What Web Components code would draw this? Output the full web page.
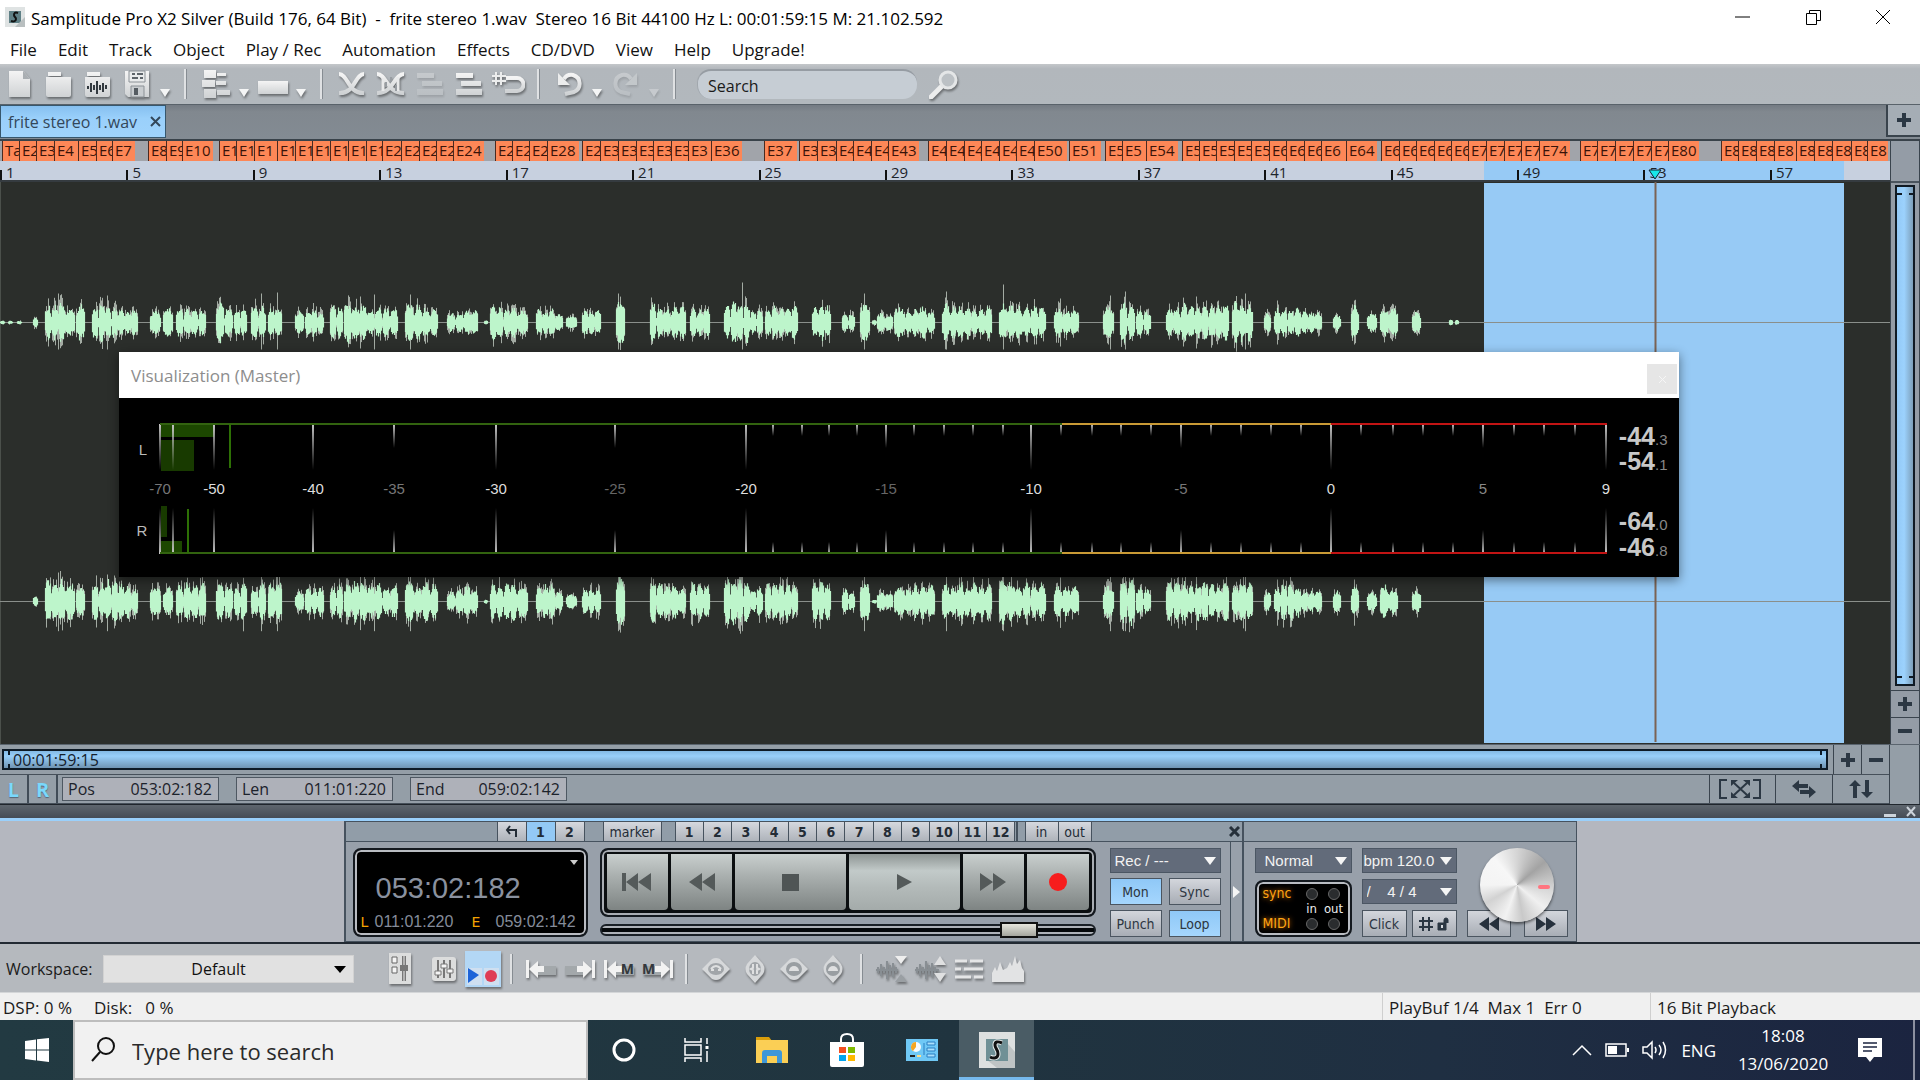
<!DOCTYPE html>
<html lang="en">
<head>
<meta charset="utf-8">
<title>Samplitude Pro X2 Silver</title>
<style>
    html, body {
        margin: 0;
        height: 100%;
    }

    body {
        font-family: "Open Sans", "Noto Sans", sans-serif;
        font-size: 16px;
        color: #111;
        overflow: hidden;
    }
</style>
</head>
<body>
<daw-app></daw-app>

<script>
    const BASE_CSS = `
        * { box-sizing: border-box; }
        button, input, select { font: inherit; color: inherit; margin: 0; padding: 0; border: 0; background: none; border-radius: 0; outline: none; }
        button { display: flex; align-items: center; justify-content: center; }
        a { color: inherit; text-decoration: none; }
    `;

    // Registers an element whose shadow root is filled from a template
    function define(name, css, html, setup) {
        const template = document.createElement('template');
        template.innerHTML = `<style>${BASE_CSS}${css}</style>${html}`;

        customElements.define(name, class extends HTMLElement {
            constructor() {
                super();
                this.attachShadow({ mode: 'open' });
            }

            connectedCallback() {
                if (this.shadowRoot.firstChild) return;
                this.shadowRoot.appendChild(template.content.cloneNode(true));
                if (setup) setup(this, this.shadowRoot);
            }
        });
    }

    /* ---------- icons ---------- */

    const ICONS = {
        app: [20, 20, '<path d="M0 0h20v20H0z" fill="#dfe3e3"/><path d="M4 4h12v12H4z" fill="#5f8086"/><path d="M20 10v10H10z" fill="#b9bfc0"/><path d="M13 6c-3-1-4 0-4 2s2 2 2 4-2 3-5 2" fill="none" stroke="#111" stroke-width="2"/>'],
        newdoc: [24, 28, '<path d="M1 1h14l7 8v18H1z" fill="url(#m)"/><path d="M15 1v8h7z" fill="#a9aeb2"/>'],
        folder: [28, 26, '<path d="M3 1h13v4H3zM1 6h25v18a2 2 0 0 1-2 2H3a2 2 0 0 1-2-2z" fill="url(#m)"/>'],
        wavefolder: [28, 26, '<path d="M3 1h13v4H3zM1 6h25v18a2 2 0 0 1-2 2H3a2 2 0 0 1-2-2z" fill="url(#m)"/><path d="M4 15v3M7 12v9M10 14v5M13 10v13M16 14v5M19 12v9M22 14v4" stroke="#333a40" stroke-width="2"/>'],
        save: [26, 28, '<path d="M1 1h24v26H4l-3-3z" fill="url(#m)"/><path d="M5 1h16v11H5z" fill="#e9ebec" stroke="#8b9196"/><path d="M8 4h3m2 0h6M8 8h6m2 0h3" stroke="#5d646a" stroke-width="2"/><path d="M7 16h13v11H7z" fill="#c9cdd0" stroke="#8b9196"/><path d="M10 18h4v7h-4z" fill="#555c62"/>'],
        caret: [12, 28, '<path d="M1 19h10l-5 8z" fill="#f4f5f5"/>'],
        tracks: [30, 28, '<path d="M3 0h12v8H3zM1 10h13v7H1zM3 19h12v9H3zM16 3h9v3h-9zM15 11h10v4H15zM16 20h13v5H16z" fill="url(#m)"/>'],
        object: [32, 28, '<path d="M1 11h30v13H1z" fill="url(#m)"/>'],
        cross: [28, 24, '<path d="M1 2c9 0 9 20 25 19M1 21c16 1 16-19 25-19" fill="none" stroke="url(#m)" stroke-width="4"/>'],
        crosswave: [30, 24, '<path d="M1 2c10 0 10 20 27 19M1 21c16 1 17-19 27-19" fill="none" stroke="url(#m)" stroke-width="4"/><path d="M7 6v13M22 5v14" stroke="#e8e9ea" stroke-width="3"/><path d="M10 10v5M15 5v5M20 13v6" stroke="#989da2" stroke-width="2"/>'],
        list: [28, 26, '<path d="M1 2h17v5H1zM6 10h20v5H6zM1 18h26v6H1z" fill="url(#m)"/>'],
        grid: [34, 26, '<path d="M5 1v13M10 1v13M1 5h14M1 10h14" stroke="#eceded" stroke-width="2"/><path d="M15 7h11a5 5 0 0 1 0 13H14" fill="none" stroke="url(#m)" stroke-width="4"/>'],
        undo: [26, 28, '<path d="M8 9q3-5 9-4a9 9 0 0 1 1 17l-9 2" fill="none" stroke="url(#m)" stroke-width="4"/><path d="M2 3v12h12z" fill="#eceded"/>'],
        redo: [26, 28, '<path d="M18 9q-3-5-9-4a9 9 0 0 0-1 17l9 2" fill="none" stroke="url(#m)" stroke-width="4"/><path d="M24 3v12h-12z" fill="#eceded"/>'],
        loupe: [30, 30, '<path d="M12 18L2 28" stroke="#eceded" stroke-width="5" stroke-linecap="round"/><circle cx="19" cy="11" r="8" fill="#bcc1c5" stroke="#e4e6e7" stroke-width="3"/>'],
        mixer: [24, 34, '<path d="M1 1h22v31H1z" fill="#dcdddd"/><path d="M4 5h5v6H4zM4 15h5v6H4z" fill="#f5f5f5" stroke="#666"/><path d="M16 4v25" stroke="#777" stroke-width="4"/><path d="M16 4v25" stroke="#eee" stroke-width="1"/><path d="M12 13h8v6h-8z" fill="#777"/>'],
        faders: [26, 26, '<rect x="1" y="1" width="24" height="24" rx="3" fill="#dcdddd"/><path d="M7 4v18M13 4v18M19 4v18" stroke="#777" stroke-width="2"/><path d="M4 15h6v4H4zM10 8h6v4h-6zM16 13h6v4h-6z" fill="#f4f4f4" stroke="#777"/>'],
        playrec: [36, 36, '<path d="M0 0h36v36H0z" fill="#b3d7f5"/><path d="M2 17h15v17H2zM19 17h15v17H19z" fill="#cfdff0"/><path d="M3 17v15l11-8z" fill="#1c63d8"/><circle cx="26" cy="25" r="6" fill="#df3c55"/>'],
        toleft: [32, 20, '<path d="M12 7h19v9H12z" fill="#a3a8ab"/><path d="M1 1h3v18H1zM4 10l9-8v5h6v6h-6v6z" fill="#f2f2f2"/>'],
        toright: [32, 20, '<path d="M1 7h19v9H1z" fill="#a3a8ab"/><path d="M28 1h3v18h-3zM28 10l-9-8v5h-6v6h6v6z" fill="#f2f2f2"/>'],
        diamond: [30, 24, '<path d="M1 12L11 2q4-2 8 0l10 10-10 10q-4 2-8 0z" fill="#d6d8da"/><ellipse cx="15" cy="12" rx="8" ry="6" fill="#a1a5a9"/><path d="M10 12q5-6 10 0M10 13h3m4 0h3" stroke="#dfe0e1" stroke-width="2" fill="none"/>'],
        diamondtall: [22, 30, '<path d="M11 1l8 9q3 5 0 10l-8 9-8-9q-3-5 0-10z" fill="#d6d8da"/><ellipse cx="11" cy="15" rx="6" ry="7" fill="#a1a5a9"/><path d="M9 10v4l-2 1 2 1v4M13 10v4l2 1-2 1v4" stroke="#dfe0e1" stroke-width="2" fill="none"/>'],
        diamondflat: [30, 24, '<path d="M1 12L11 2q4-2 8 0l10 10-10 10q-4 2-8 0z" fill="#d6d8da"/><ellipse cx="15" cy="12" rx="8" ry="7" fill="#999ea2"/><path d="M10 14a5 5 0 0 1 10 0z" fill="#dfe0e1"/>'],
        diamondflattall: [22, 30, '<path d="M11 1l8 9q3 5 0 10l-8 9-8-9q-3-5 0-10z" fill="#d6d8da"/><ellipse cx="11" cy="15" rx="7" ry="7" fill="#999ea2"/><path d="M6 17a5 5 0 0 1 10 0z" fill="#dfe0e1"/>'],
        wavein: [32, 28, '<path d="M1 15h22M3 12v6M6 9v12M9 12v6M12 6v18M15 10v10M18 8v14M21 12v6" stroke="#888e93" stroke-width="2"/><path d="M20 1h12l-6 8z" fill="#eee"/><path d="M20 27h12l-6-8z" fill="#9a9fa3"/>'],
        waveout: [32, 28, '<path d="M1 15h24M3 12v6M6 9v12M9 12v6M12 6v18M15 10v10M18 8v14M21 12v6" stroke="#888e93" stroke-width="2"/><path d="M20 10h12l-6-9zM20 18h12l-6 9z" fill="#dfe0e1"/>'],
        arrange: [30, 22, '<path d="M1 3h12m3 0h13M1 11h6m3 0h19M1 19h16m3 0h9" stroke="#e5e6e7" stroke-width="3"/><path d="M1 6h28M1 14h28" stroke="#8d9398"/>'],
        spectrum: [34, 28, '<path d="M1 27v-9l3-6 2 4 3-9 3 8 4-2 3-6 2 4 3-10 2 8 3-4 2 8 2 3v11z" fill="#e2e3e4"/>'],
        expand: [42, 20, '<path d="M8 1H1v18h7M34 1h7v18h-7" fill="none" stroke="#2b3743" stroke-width="2"/><path d="M15 4l13 12M28 4L15 16" stroke="#2b3743" stroke-width="2"/><path d="M12 1h7l-7 6zM31 1h-7l7 6zM12 19h7l-7-6zM31 19h-7l7-6z" fill="#2b3743"/>'],
        swap: [26, 18, '<path d="M1 6l7-6v4h9v4H8v4zM25 12l-7-6v4H9v4h9v4z" fill="#2b3743"/>'],
        updown: [24, 18, '<path d="M6 0l6 6H8v12H4V6H0zM18 18l-6-6h4V0h4v12h4z" fill="#2b3743"/>'],
        plus: [14, 14, '<path d="M5 0h4v5h5v4H9v5H5V9H0V5h5z" fill="#2b3743"/>'],
        minus: [14, 14, '<path d="M0 5h14v4H0z" fill="#2b3743"/>'],
        lock: [12, 14, '<path d="M1 6h8v7H1zM7 6V3a2 2 0 0 1 4 0v3" fill="#2b3743" stroke="#2b3743" stroke-width="1"/><path d="M4 8h2v3H4z" fill="#d5d9de"/>']
    };

    // Metallic gradient shared by the toolbar glyphs
    const METAL = '<defs><linearGradient id="m" x1="0" y1="0" x2="0" y2="1"><stop offset="0" stop-color="#f4f4f4"/><stop offset="1" stop-color="#cfd2d4"/></linearGradient></defs>';

    define('daw-icon', `
        :host { display: block; line-height: 0; }
        svg { display: block; }
    `, '', (host, root) => {
        const [w, h, body] = ICONS[host.getAttribute('name')];
        root.innerHTML += `<svg width="${w}" height="${h}" viewBox="0 0 ${w} ${h}" aria-hidden="true">${METAL}${body}</svg>`;
    });

    /* ---------- small controls ---------- */

    define('daw-tool', `
        :host { display: block; flex: 0 0 39px; height: 36px; }
        :host([kind="caret"]) { flex-basis: 18px; }
        :host([faded]) { opacity: .3; }
        button { width: 100%; height: 100%; }
        daw-icon { filter: drop-shadow(1px 2px 1px #0006); }
    `, '<button></button>', (host, root) => {
        const name = host.getAttribute('icon');
        const button = root.querySelector('button');
        button.setAttribute('aria-label', name);
        button.innerHTML = `<daw-icon name="${name}"></daw-icon>`;
    });

    // Jump-to-marker arrow with its letter on top
    define('daw-markertool', `
        :host { display: block; flex: 0 0 39px; height: 36px; }
        button { position: relative; width: 100%; height: 100%; }
        daw-icon { filter: drop-shadow(1px 2px 1px #0006); }
        b { position: absolute; top: 9px; right: 4px; font-size: 14px; line-height: 18px; color: #33383c; }
        :host([side="right"]) b { right: auto; left: 4px; }
    `, '<button></button>', (host, root) => {
        root.querySelector('button').innerHTML = `<daw-icon name="to${host.getAttribute('side')}"></daw-icon><b><slot></slot></b>`;
    });

    define('daw-sep', `
        :host { display: flex; flex: 0 0 22px; height: 30px; justify-content: center; }
        :host([narrow]) { flex-basis: 19px; }
        i { width: 3px; border-left: 2px solid #dfe1e3; border-right: 1px solid #868c92; }
    `, '<i></i>');

    define('daw-field', `
        :host { display: flex; align-items: center; justify-content: space-between; width: 157px; height: 24px; padding: 0 6px 0 5px; border: 1px solid #4e5862; background: #aeb1b9; color: #1c222b; }
    `, '<span></span><slot></slot>', (host, root) => {
        root.querySelector('span').textContent = host.getAttribute('label');
    });

    define('daw-select', `
        :host { display: flex; position: relative; height: 25px; background: #626b7a; border: 1px solid #4b5663; color: #f2f2f2; font-family: "Liberation Sans", sans-serif; font-size: 15px; }
        select { appearance: none; width: 100%; padding: 0 18px 0 4px; }
        :host([wide]) { padding-left: 5px; }
        :host([tight]) select { padding: 0 16px 0 1px; }
        :host::after { content: ""; position: absolute; right: 4px; top: 8px; border: 6px solid transparent; border-top: 8px solid #f5f5f5; border-bottom: 0; pointer-events: none; }
        :host([light]) { height: 28px; background: #e1e1e1; border: 1px solid #d2d2d2; color: #111; font-family: inherit; font-size: 16px; }
        :host([light]) select { text-align: center; text-align-last: center; padding-right: 24px; }
        :host([light])::after { right: 7px; top: 10px; border-width: 7px 6px 0; border-top-color: #000; }
    `, '<select></select>', (host, root) => {
        const select = root.querySelector('select');
        select.setAttribute('aria-label', host.getAttribute('label'));
        select.innerHTML = `<option>${host.getAttribute('value')}</option>`;
    });

    /* ---------- title, menu, toolbar ---------- */

    define('daw-titlebar', `
        :host { display: flex; align-items: center; height: 34px; padding-left: 5px; background: #fff; color: #000; }
        h1 { flex: 1; margin: 3px 0 0 6px; font-size: 17px; line-height: 22px; font-weight: 400; white-space: pre; }
        .controls { display: flex; align-self: stretch; margin-right: 2px; }
        .controls button { width: 70px; }
    `, `
        <daw-icon name="app"></daw-icon>
        <h1><slot></slot></h1>
        <div class="controls">
            <button aria-label="Minimize"><svg width="16" height="16"><path d="M0 8h15" stroke="#000"/></svg></button>
            <button aria-label="Restore"><svg width="16" height="16" fill="none" stroke="#000"><path d="M1.500 4.500h10v11h-10zM4.500 4V1.500h11v10H12"/></svg></button>
            <button aria-label="Close"><svg width="16" height="16" stroke="#000"><path d="M1 1l14 14M15 1L1 15"/></svg></button>
        </div>
    `);

    define('daw-menubar', `
        :host { display: block; background: #fff; height: 30px; font-size: 17px; }
        nav { display: flex; align-items: center; gap: 21px; height: 31px; padding-left: 10px; }
        ::slotted(a) { color: #1b1b1b; text-decoration: none; white-space: nowrap; }
    `, '<nav><slot></slot></nav>');

    define('daw-toolbar', `
        :host { display: flex; align-items: center; height: 41px; background: linear-gradient(#c4c7ca, #b2b7bc 12%, #b2b8bd); border-bottom: 1px solid #59626a; }
        input { width: 220px; height: 30px; margin-left: 12px; padding: 1px 10px 0; border-radius: 14px; background: #c6cdd4; border-top: 2px solid #969ca3; border-left: 1px solid #a1a7ad; color: #111; }
        input::placeholder { color: #1a1a1a; opacity: 1; }
        .find { margin-left: 12px; filter: drop-shadow(1px 2px 1px #0006); }
    `, `
        <daw-tool icon="newdoc"></daw-tool>
        <daw-tool icon="folder"></daw-tool>
        <daw-tool icon="wavefolder"></daw-tool>
        <daw-tool icon="save"></daw-tool>
        <daw-tool icon="caret" kind="caret"></daw-tool>
        <daw-sep></daw-sep>
        <daw-tool icon="tracks"></daw-tool>
        <daw-tool icon="caret" kind="caret"></daw-tool>
        <daw-tool icon="object"></daw-tool>
        <daw-tool icon="caret" kind="caret"></daw-tool>
        <daw-sep></daw-sep>
        <daw-tool icon="cross"></daw-tool>
        <daw-tool icon="crosswave"></daw-tool>
        <daw-tool icon="list" faded></daw-tool>
        <daw-tool icon="list"></daw-tool>
        <daw-tool icon="grid"></daw-tool>
        <daw-sep></daw-sep>
        <daw-tool icon="undo"></daw-tool>
        <daw-tool icon="caret" kind="caret"></daw-tool>
        <daw-tool icon="redo" faded></daw-tool>
        <daw-tool icon="caret" kind="caret" faded></daw-tool>
        <daw-sep></daw-sep>
        <input type="text" placeholder="Search" aria-label="Search">
        <button class="find" aria-label="Find"><daw-icon name="loupe"></daw-icon></button>
    `);

    define('daw-tabs', `
        :host { display: flex; align-items: flex-start; height: 36px; background: linear-gradient(#747b83, #81888f 20%, #838b93); border-bottom: 2px solid #39424a; }
        .tab { display: flex; align-items: center; gap: 13px; height: 33px; padding: 0 4px 0 7px; background: linear-gradient(#86c0f0, #9ad0fb 40%, #9fd3fc); border: 1px solid #37576d; color: #33475a; white-space: nowrap; }
        .add { width: 34px; height: 32px; margin-left: auto; background: #a5adb5; border: 1px solid #39434c; border-width: 0 0 2px 2px; }
    `, `
        <div class="tab"><slot></slot><button aria-label="Close tab"><svg width="11" height="11" stroke="#33475a" stroke-width="2"><path d="M1 1l9 9M10 1L1 10"/></svg></button></div>
        <button class="add" aria-label="New tab"><daw-icon name="plus"></daw-icon></button>
    `);

    /* ---------- timeline ---------- */

    // Left edges of the marker flags; the last number of a run is where its final flag ends
    const MARKERS = [
        [2, 19, 36, 54, 78, 96, 112, 135],
        [148, 166, 182, 213],
        [219, 236, 254, 277, 295, 312, 330, 348, 366, 382, 401, 419, 436, 453, 484],
        [495, 512, 529, 547, 579],
        [582, 600, 618, 636, 653, 671, 688, 711, 742],
        [764, 797],
        [799, 817, 836, 853, 871, 888, 919],
        [928, 946, 964, 981, 999, 1016, 1034, 1067],
        [1069, 1101],
        [1105, 1122, 1146, 1178],
        [1182, 1199, 1216, 1234, 1251, 1269, 1286, 1304, 1321, 1346, 1377],
        [1381, 1399, 1416, 1434, 1451, 1468, 1486, 1504, 1521, 1539, 1570],
        [1580, 1597, 1615, 1633, 1651, 1668, 1699],
        [1721, 1738, 1756, 1774, 1796, 1814, 1832, 1851, 1867, 1888]
    ];

    define('daw-ruler', `
        :host { display: block; }
        .markers { display: flex; height: 20px; background: #a1a4aa; font-size: 15px; line-height: 19px; color: #3a1409; }
        .markers span, .markers i { min-width: 0; }
        .markers span { overflow: hidden; text-indent: 3px; background: linear-gradient(#4b2a20, #4b2a20) 0 0 / 1px 100% no-repeat #fd8757; white-space: nowrap; }
        .bars { display: flex; position: relative; height: 21px; background: #c7d0df; border-bottom: 2px solid #353b40; font-size: 15px; line-height: 22px; color: #1d242c; }
        .bars span { position: relative; text-indent: 6px; min-width: 0; background: linear-gradient(#111, #111) 0 100% / 2px 10px no-repeat; z-index: 1; }
        .sel { position: absolute; left: 78.500%; width: 19.050%; top: 0; bottom: 0; background: #97caf5; }
        .head { position: absolute; left: 87.560%; top: 8px; margin-left: -7px; z-index: 2; }
    `, `
        <div class="markers"></div>
        <div class="bars"><div class="sel"></div><svg class="head" width="14" height="11"><path d="M1 1h12L7 10z" fill="#17e8ea" stroke="#123"/></svg></div>
    `, (host, root) => {
        let number = 1;
        let at = 0;
        let html = '';
        for (const run of MARKERS) {
            html += `<i style="flex:${run[0] - at}"></i>`;
            for (let i = 0; i < run.length - 1; i++) {
                const width = run[i + 1] - run[i];
                const label = number === 1 ? 'Ta' : 'E' + number;
                html += `<span style="flex:${width}">${width < 28 ? label.slice(0, 2) : label}</span>`;
                number++;
            }
            at = run[run.length - 1];
        }
        root.querySelector('.markers').innerHTML = html + `<i style="flex:${1890 - at}"></i>`;

        const bars = root.querySelector('.bars');
        for (let bar = 1; bar <= 57; bar += 4) {
            const label = document.createElement('span');
            label.textContent = bar;
            label.style.flex = bar === 57 ? '120' : '126.4';
            bars.appendChild(label);
        }
    });

    // start, end, amplitude of every burst in the recording
    const BURSTS = [
        [0, 4, 3], [8, 12, 2], [17, 21, 2], [33, 37, 7],
        [45, 64, 24], [65, 74, 19], [76, 84, 20], [92, 117, 24], [118, 137, 18], [150, 160, 16], [163, 172, 17],
        [176, 205, 20], [216, 232, 22], [234, 246, 21], [251, 265, 20], [268, 281, 22], [295, 303, 14], [305, 323, 16],
        [330, 342, 19], [344, 366, 24], [367, 397, 19], [405, 413, 27], [414, 437, 20], [447, 463, 14], [464, 477, 18],
        [484, 487, 3], [490, 516, 20], [517, 527, 18], [536, 554, 18], [555, 562, 12], [566, 576, 10], [582, 600, 15],
        [616, 624, 25], [650, 662, 23], [663, 678, 21], [679, 685, 19], [690, 709, 20], [724, 749, 25], [750, 762, 16],
        [765, 797, 21], [812, 830, 21], [842, 854, 14], [860, 869, 24], [872, 876, 3], [877, 892, 12], [894, 904, 20],
        [905, 918, 17], [919, 934, 18], [942, 949, 24], [950, 991, 20], [999, 1014, 25], [1015, 1045, 20],
        [1054, 1078, 18], [1103, 1113, 23], [1120, 1134, 25], [1136, 1150, 15], [1166, 1187, 21], [1188, 1228, 21],
        [1232, 1252, 24], [1264, 1270, 14], [1274, 1300, 19], [1301, 1321, 13], [1333, 1340, 11], [1351, 1358, 20],
        [1367, 1376, 13], [1380, 1397, 17], [1412, 1420, 13]
    ];

    const SPIKES = [
        [58, 29], [107, 27], [261, 29], [277, 30], [360, 26], [374, 28], [410, 28], [618, 29], [742, 40], [864, 29],
        [946, 31], [1003, 38], [1060, 24], [1110, 27], [1125, 31], [1196, 26], [1245, 29], [1277, 22], [1354, 22]
    ];

    function drawWave(mid, scale, bursts) {
        let seed = 7;
        const rand = () => (seed = (seed * 16807) % 2147483647) / 2147483647;
        let core = '';
        let edge = '';
        for (const [from, to, amp] of bursts) {
            // every burst is a chain of short lobes
            const count = Math.max(1, Math.round((to - from) / 7));
            const lobe = (to - from + 1) / count;
            const heights = Array.from({ length: count }, () => 0.7 + 0.3 * rand());
            const floor = amp > 5 ? 0.3 : 0;
            for (let x = from; x <= to; x++) {
                const n = Math.min(count - 1, Math.floor((x + 0.5 - from) / lobe));
                const t = (x + 0.5 - from - n * lobe) / lobe;
                const bump = Math.sqrt(Math.max(0, Math.sin(Math.PI * t)));
                const env = (floor + (1 - floor) * bump) * heights[n] * amp * scale;
                const up = env * (0.6 + 0.35 * rand());
                const down = env * (0.6 + 0.35 * rand());
                core += `M${x + 0.5} ${(mid - up).toFixed(1)}V${(mid + down).toFixed(1)}`;
                if (rand() > 0.6) {
                    edge += `M${x + 0.5} ${(mid - env * (0.9 + 0.4 * rand())).toFixed(1)}V${(mid + env * (0.9 + 0.4 * rand())).toFixed(1)}`;
                }
            }
        }
        for (const [x, h] of SPIKES) {
            edge += `M${x + 0.5} ${mid - h}V${mid + Math.min(h, 27) * scale}`;
        }
        return `<path d="${edge}" stroke="#a3aba3"/><path d="${core}" stroke="#bdf5cb" stroke-width="1.200"/>`;
    }

    define('daw-wave', `
        :host { display: block; position: relative; min-height: 0; background: #2b2e2b; overflow: hidden; }
        svg { display: block; width: 100%; height: 100%; }
    `, '', (host, root) => {
        root.innerHTML += `
            <svg viewBox="0 0 1890 562" preserveAspectRatio="none" aria-label="Waveform">
                <path d="M0 0V562" stroke="#6d726d"/>
                <path d="M1484 1H1844V561H1484z" fill="#97caf5"/>
                <path d="M0 140.500H1890M0 419.500H1890" stroke="#8a8f8b" stroke-width="1"/>
                ${drawWave(140.5, 1, [...BURSTS, [1449, 1452, 4], [1455, 1458, 3]])}
                ${drawWave(419.5, 1.1, BURSTS.slice(3))}
                <path d="M1655.500 0V560" stroke="#7b6354" stroke-width="2"/>
            </svg>`;
    });

    define('daw-vscroll', `
        :host { display: flex; flex-direction: column; background: #949ca6; border-left: 1px solid #3a444e; border-right: 1px solid #3a444e; }
        .head { flex: 0 0 42px; border-bottom: 2px solid #4a545e; }
        .track { flex: 1; padding: 2px 4px 4px; }
        .thumb { height: 100%; border: 2px solid #101a24; background: linear-gradient(90deg, #93c9f6, #9cd2fd 45%, #7d9fba); padding: 6px 0; display: flex; flex-direction: column; justify-content: space-between; }
        .thumb i { height: 2px; background: linear-gradient(90deg, #101a24 5px, transparent 5px 12px, #101a24 12px); }
        button { height: 27px; border-top: 1px solid #3a444e; }
    `, `
        <div class="head"></div>
        <div class="track"><div class="thumb"><i></i><i></i></div></div>
        <button aria-label="Zoom in vertically"><daw-icon name="plus"></daw-icon></button>
        <button aria-label="Zoom out vertically"><daw-icon name="minus"></daw-icon></button>
    `);

    /* ---------- level meter window ---------- */

    // dB value, x, tick length, label tone
    const TICKS = [
        [-70, 41, 46, '#777'], [null, 54, 46], [-50, 95, 46, '#ddd'], [-40, 194, 46, '#ddd'], [-35, 275, 24, '#777'],
        [-30, 377, 46, '#ddd'], [-25, 496, 24, '#666'], [-20, 627, 46, '#ddd'], [-15, 767, 24, '#666'],
        [-10, 912, 46, '#ddd'], [-5, 1062, 24, '#777'], [0, 1212, 46, '#ddd'], [5, 1364, 24, '#888'], [9, 1487, 46, '#ddd']
    ];
    const MINOR = [654, 683, 710, 738, 795, 825, 854, 884, 942, 973, 1002, 1032, 1092, 1122, 1152, 1182, 1242, 1274, 1304, 1334, 1395, 1425, 1456];

    define('daw-meter', `
        :host { display: block; background: #000; box-shadow: 0 3px 10px #0007; }
        header { display: flex; align-items: center; height: 46px; padding: 0 2px 0 12px; background: #fff; }
        h2 { flex: 1; margin: 0; font-size: 17px; font-weight: 400; color: #8d8d8d; }
        button { width: 30px; height: 30px; margin-top: 8px; background: #e6e6e6; }
        svg { display: block; }
        .plot { width: 100%; height: auto; font-family: "Liberation Sans", sans-serif; }
    `, `
        <header><h2><slot></slot></h2><button aria-label="Close"><svg width="9" height="9" stroke="#f6f6f6"><path d="M1 1l7 7M8 1L1 8"/></svg></button></header>
    `, (host, root) => {
        let ticks = '';
        let labels = '';
        const tick = (x, len) => {
            ticks += `<rect x="${x - 1}" y="26" width="2" height="${len}" fill="url(#down)"/><rect x="${x - 1}" y="${156 - len}" width="2" height="${len}" fill="url(#up)"/>`;
        };
        for (const [db, x, len, tone] of TICKS) {
            tick(x, len);
            if (db !== null) labels += `<text x="${x}" y="96" fill="${tone}">${db}</text>`;
        }
        MINOR.forEach(x => tick(x, 12));
        const line = y => `<path d="M41 ${y}H943" stroke="#32630f"/><path d="M943 ${y}H1212" stroke="#c99a35"/><path d="M1212 ${y}H1488" stroke="#c11414"/>`;
        const value = (y, big, small) => `<text x="1536" y="${y}" text-anchor="end" font-size="25" font-weight="700" fill="#c8c8c8">${big}</text><text x="1536" y="${y}" text-anchor="start" font-size="15" fill="#888">${small}</text>`;

        root.innerHTML += `
            <svg class="plot" viewBox="0 0 1560 179" font-size="15" text-anchor="middle">
                <defs>
                    <linearGradient id="down" x1="0" y1="0" x2="0" y2="1"><stop offset="0" stop-color="#c5c5c5"/><stop offset="1" stop-color="#c5c5c5" stop-opacity="0"/></linearGradient>
                    <linearGradient id="up" x1="0" y1="1" x2="0" y2="0"><stop offset="0" stop-color="#c5c5c5"/><stop offset="1" stop-color="#c5c5c5" stop-opacity="0"/></linearGradient>
                </defs>
                <path d="M42 26H95V39H42zM42 143H63V156H42z" fill="#1c4700"/>
                <path d="M42 42H75V73H42zM42 108H48V139H42z" fill="#183a00"/>
                ${ticks}
                <g stroke-width="2">${line(26)}${line(155)}</g>
                <path d="M111 26V70M69 111V155" stroke="#2d7005" stroke-width="2"/>
                <text x="24" y="57" fill="#bbb">L</text>
                <text x="23" y="138" fill="#bbb">R</text>
                ${labels}
                ${value(47, '-44', '.3')}${value(72, '-54', '.1')}${value(132, '-64', '.0')}${value(158, '-46', '.8')}
            </svg>`;
    });

    define('daw-arranger', `
        :host { display: grid; grid-template-columns: 1fr 30px; flex: 1; min-height: 0; }
        .main { position: relative; display: flex; flex-direction: column; min-width: 0; min-height: 0; }
        daw-wave { flex: 1; }
        /* floats over the waveform */
        daw-meter { position: absolute; left: 119px; right: 211px; top: 211px; }
    `, `
        <div class="main">
            <daw-ruler></daw-ruler>
            <daw-wave></daw-wave>
            <daw-meter>Visualization (Master)</daw-meter>
        </div>
        <daw-vscroll></daw-vscroll>
    `);

    define('daw-hscroll', `
        :host { display: grid; grid-template-columns: 1fr 30px; background: #949ea7; border-top: 1px solid #5a646e; height: 60px; }
        .rows { border-right: 1px solid #3a444e; }
        .side { border-right: 1px solid #3a444e; }
        .row { display: flex; align-items: center; height: 30px; border-bottom: 1px solid #46505a; }
        .row + .row { height: 29px; }
        .thumb { flex: 1; display: flex; align-items: center; gap: 3px; height: 21px; margin: 0 5px 0 2px; padding: 0 4px; border: 2px solid #0d1a26; background: linear-gradient(#83b9e4, #98cffa 30%, #6f94b3); color: #14202c; }
        .thumb::before, .thumb::after { content: ""; width: 2px; height: 17px; background: linear-gradient(#0d1a26 4px, transparent 4px 13px, #0d1a26 13px); }
        .thumb::after { margin-left: auto; }
        button { align-self: stretch; width: 28px; border-left: 1px solid #3a444e; }
        .row + .row button { width: 57px; }
        .row + .row button.all { width: 66px; padding-right: 5px; }
        .row + .row .ch { width: 29px; border-width: 0 2px 0 0; border-style: solid; border-color: #414c57; font-weight: 700; font-size: 20px; color: #7ad8fb; text-shadow: 0 1px 1px #567; }
        .fields { display: flex; flex: 1; gap: 17px; padding-left: 4px; }
    `, `
        <div class="rows">
            <div class="row">
                <div class="thumb"><span>00:01:59:15</span></div>
                <button aria-label="Zoom in"><daw-icon name="plus"></daw-icon></button>
                <button aria-label="Zoom out"><daw-icon name="minus"></daw-icon></button>
            </div>
            <div class="row">
                <button class="ch">L</button>
                <button class="ch">R</button>
                <div class="fields">
                    <daw-field label="Pos">053:02:182</daw-field>
                    <daw-field label="Len">011:01:220</daw-field>
                    <daw-field label="End">059:02:142</daw-field>
                </div>
                <button class="all" aria-label="Show all"><daw-icon name="expand"></daw-icon></button>
                <button aria-label="Horizontal"><daw-icon name="swap"></daw-icon></button>
                <button aria-label="Vertical"><daw-icon name="updown"></daw-icon></button>
            </div>
        </div>
        <div class="side"></div>
    `);

    /* ---------- transport ---------- */

    define('daw-display', `
        :host { display: flex; flex-direction: column; position: relative; width: 235px; height: 89px; padding: 0 6px; border: 2px solid #14191f; border-radius: 8px; background: #000; box-shadow: inset 0 0 0 2px #b9bcc2; font-family: "Liberation Sans", sans-serif; color: #858c9a; }
        .time { margin: 20px 0 0 15px; font-size: 29px; line-height: 36px; color: #8a919f; }
        .sub { display: grid; grid-template-columns: 14px 97px 24px 1fr; font-size: 16px; line-height: 20px; margin-top: 6px; }
        b { font-family: "DejaVu Sans", sans-serif; font-size: 14px; font-weight: 400; color: #f5a300; }
        .tri { position: absolute; right: 8px; top: 10px; border: 4px solid transparent; border-top: 5px solid #ccc; border-bottom: 0; }
    `, `
        <i class="tri"></i>
        <div class="time">053:02:182</div>
        <div class="sub"><b>L</b><span>011:01:220</span><b>E</b><span>059:02:142</span></div>
    `);

    define('daw-deck', `
        :host { display: flex; flex-direction: column; gap: 6px; width: 496px; }
        .keys { display: flex; gap: 3px; height: 69px; padding: 4px 5px 5px; border: 2px solid #14191f; border-radius: 8px; background: #0b0e10; box-shadow: inset 0 0 0 2px #a9adb3; }
        .keys button { flex: 62; border-radius: 0 0 4px 4px; background: linear-gradient(#c9cfce, #a9afae 40%, #7e8483); }
        .keys .wide { flex: 112; }
        .keys .on { background: linear-gradient(#8e9594, #c2cac9 30%, #b3bab9 60%, #a4abaa); }
        input { appearance: none; width: 100%; height: 16px; margin-top: -1px; }
        input::-webkit-slider-runnable-track { height: 12px; border: 2px solid #1a2026; border-radius: 6px; background: linear-gradient(#aeb2b8 2px, #05080a 2px 6px, #aeb2b8 6px); }
        input::-webkit-slider-thumb { appearance: none; width: 38px; height: 16px; margin-top: -4px; border: 2px solid #111; background: linear-gradient(#e6e5dc, #a5a69e); }
    `, `
        <div class="keys">
            <button aria-label="To start"><svg width="32" height="18" fill="#545a5a"><path d="M1 0h4v18H1zM17 0v18L5 9zM30 0v18L17 9z"/></svg></button>
            <button aria-label="Rewind"><svg width="26" height="18" fill="#545a5a"><path d="M13 0v18L0 9zM26 0v18L13 9z"/></svg></button>
            <button class="wide" aria-label="Stop"><svg width="17" height="17" fill="#4f5555"><path d="M0 0h17v17H0z"/></svg></button>
            <button class="wide on" aria-label="Play"><svg width="16" height="18" fill="#545a5a"><path d="M1 1v16l15-8z"/></svg></button>
            <button aria-label="Forward"><svg width="26" height="18" fill="#545a5a"><path d="M0 0v18l13-9zM13 0v18l13-9z"/></svg></button>
            <button aria-label="Record"><svg width="20" height="20"><circle cx="10" cy="10" r="9" fill="#f71d1d"/></svg></button>
        </div>
        <input type="range" min="0" max="1000" value="878" aria-label="Scrub speed">
    `);

    define('daw-jog', `
        :host { display: grid; width: 101px; height: 89px; }
        .cap, .keys { grid-area: 1 / 1; }
        .keys { align-self: end; display: flex; justify-content: space-between; }
        button { width: 44px; height: 27px; border: 1px solid #4b5560; background: linear-gradient(#d3d6dc, #a8adb5); }
        .cap { display: flex; align-items: center; justify-content: flex-end; justify-self: center; width: 74px; height: 74px; padding: 4px 4px 0 0; border-radius: 50%; z-index: 2; background: conic-gradient(#d5d5d5, #a3a3a3 50deg, #d9d9d9 100deg, #f0f0f0 130deg, #c9c9c9 170deg, #f2f2f2 200deg, #d2d2d2 240deg, #f4f4f4 270deg, #f7f7f7 320deg, #d5d5d5); box-shadow: 0 2px 3px #0008; }
        .cap i { width: 12px; height: 4px; background: #ff7580; border-radius: 2px; }
    `, `
        <div class="cap"><i></i></div>
        <div class="keys">
            <button aria-label="Jog back"><svg width="20" height="14" fill="#26313d"><path d="M10 0v14L0 7zM20 0v14L10 7z"/></svg></button>
            <button aria-label="Jog forward"><svg width="20" height="14" fill="#26313d"><path d="M0 0v14l10-7zM10 0v14l10-7z"/></svg></button>
        </div>
    `);

    define('daw-transport', `
        :host { display: block; border-bottom: 2px solid #222a33; background: #b4b7bf; font-family: "DejaVu Sans Condensed", "DejaVu Sans", sans-serif; font-size: 14px; }
        .grip { display: flex; align-items: center; justify-content: flex-end; gap: 10px; height: 14px; padding-right: 4px; background: linear-gradient(#5e666e, #454c56); border-top: 1px solid #20262d; }
        .panel { display: flex; justify-content: center; border-top: 3px solid #9ad0fb; }
        section { border: 1px solid #46525e; border-left-width: 2px; background: #98a0aa; }
        section + section { border-left-width: 1px; }
        .strip { display: flex; height: 20px; background: #919da8; border-bottom: 1px solid #46525e; }
        .strip button { width: 29px; border-right: 1px solid #46525e; background: linear-gradient(#d5d8de, #aeb3ba); color: #232c36; font-size: 14px; }
        .strip .num { font-weight: 700; }
        .strip .on { background: #93c9f5; }
        .strip .marker { width: 59px; border-left: 1px solid #46525e; }
        .strip .io { width: 33px; }
        .tabs, .numbers, .inout { display: flex; }
        .tabs { margin-left: 151px; border-left: 1px solid #46525e; }
        .marker { margin: 0 13px 0 18px; }
        .numbers { width: 343px; margin-right: 7px; border-left: 1px solid #46525e; border-right: 2px solid #46525e; }
        .numbers button { flex: 1; }
        .inout { border-left: 1px solid #46525e; }
        .strip .shut { margin-left: auto; width: 14px; border: 0; background: none; }
        .body { display: flex; height: 99px; padding-left: 7px; padding-top: 6px; }
        daw-deck { margin: 0 14px 0 12px; }
        .rec { display: grid; grid-template-columns: 52px 52px; grid-template-rows: 25px 27px 27px; gap: 5px 7px; width: 111px; height: 90px; }
        .rec daw-select { grid-column: 1 / 3; }
        .key { height: 27px; border: 1px solid #4b5560; background: linear-gradient(#d3d6dc, #a8adb5); color: #2d3641; font-size: 14px; }
        .key.on { background: linear-gradient(#8fc8f7, #a5d6fd); }
        .more { width: 12px; margin: -6px 0 0 9px; border-left: 1px solid #46525e; }
        .right .body { padding-left: 11px; padding-right: 8px; gap: 10px; }
        .sync { width: 97px; display: flex; flex-direction: column; gap: 7px; }
        .led { display: grid; grid-template-columns: 40px 22px 22px; height: 57px; padding: 4px; border: 2px solid #14191f; border-radius: 8px; background: #000; box-shadow: inset 0 0 0 2px #b9bcc2; color: #eee; font-size: 13px; line-height: 15px; align-items: center; justify-items: center; }
        .led b { justify-self: start; padding-left: 2px; color: #ffa514; text-shadow: 0 0 5px #e07800; font-size: 14px; font-weight: 400; }
        .led i { width: 12px; height: 12px; border-radius: 50%; border: 1px solid #666; background: #2a2c2e; }
        .tempo { width: 95px; display: grid; grid-template-columns: 45px 45px; grid-template-rows: 25px 25px 27px; gap: 6px 5px; }
        .tempo daw-select { grid-column: 1 / 3; }
        .hash { gap: 4px; }
    `, `
        <div class="grip">
            <svg width="12" height="12"><path d="M0 8h12v3H0z" fill="#ccd3da"/></svg>
            <svg width="10" height="11" stroke="#ccd3da" stroke-width="2"><path d="M1 1l8 9M9 1L1 10"/></svg>
        </div>
        <div class="panel">
            <section>
                <div class="strip">
                    <div class="tabs">
                        <button aria-label="Back"><svg width="13" height="13" fill="none" stroke="#232c36" stroke-width="2"><path d="M5 1L2 5l3 4M2 5h9v7"/></svg></button>
                        <button class="num on">1</button>
                        <button class="num">2</button>
                    </div>
                    <button class="marker">marker</button>
                    <div class="numbers"></div>
                    <div class="inout">
                        <button class="io">in</button>
                        <button class="io">out</button>
                    </div>
                    <button class="shut" aria-label="Close"><svg width="11" height="11" stroke="#26303a" stroke-width="3"><path d="M1 1l9 9M10 1L1 10"/></svg></button>
                </div>
                <div class="body">
                    <daw-display></daw-display>
                    <daw-deck></daw-deck>
                    <div class="rec">
                        <daw-select label="Record mode" value="Rec / ---"></daw-select>
                        <button class="key on">Mon</button>
                        <button class="key">Sync</button>
                        <button class="key">Punch</button>
                        <button class="key on">Loop</button>
                    </div>
                    <button class="more" aria-label="More"><svg width="7" height="12"><path d="M0 0v12l7-6z" fill="#f4f4f4"/></svg></button>
                </div>
            </section>
            <section class="right">
                <div class="strip"></div>
                <div class="body">
                    <div class="sync">
                        <daw-select wide label="Speed" value="Normal"></daw-select>
                        <div class="led"><b>sync</b><i></i><i></i><span></span><span>in</span><span>out</span><b>MIDI</b><i></i><i></i></div>
                    </div>
                    <div class="tempo">
                        <daw-select tight label="Tempo" value="bpm 120.0"></daw-select>
                        <daw-select label="Measure" value="/ &nbsp; &nbsp;4 / 4"></daw-select>
                        <button class="key">Click</button>
                        <button class="key hash" aria-label="Grid lock"><svg width="14" height="14" stroke="#2b3743" stroke-width="2"><path d="M4 0v14M10 0v14M0 4h14M0 10h14"/></svg><daw-icon name="lock"></daw-icon></button>
                    </div>
                    <daw-jog></daw-jog>
                </div>
            </section>
        </div>
    `, (host, root) => {
        const numbers = root.querySelector('.numbers');
        for (let i = 1; i <= 12; i++) {
            const key = document.createElement('button');
            key.className = 'num';
            key.textContent = i;
            numbers.appendChild(key);
        }
    });

    define('daw-workspace', `
        :host { display: flex; align-items: center; height: 49px; padding: 1px 0 0 6px; background: #b5b9be; border-bottom: 1px solid #d4d6d8; }
        span { width: 97px; color: #1b1b1b; }
        daw-select { width: 251px; margin-right: 26px; }
        .first { margin-right: 5px; }
    `, `
        <span>Workspace:</span>
        <daw-select light label="Workspace" value="Default"></daw-select>
        <daw-tool class="first" icon="mixer"></daw-tool>
        <daw-tool icon="faders"></daw-tool>
        <daw-tool icon="playrec"></daw-tool>
        <daw-sep narrow></daw-sep>
        <daw-tool icon="toleft"></daw-tool>
        <daw-tool icon="toright"></daw-tool>
        <daw-markertool side="left">M</daw-markertool>
        <daw-markertool side="right">M</daw-markertool>
        <daw-sep narrow></daw-sep>
        <daw-tool icon="diamond"></daw-tool>
        <daw-tool icon="diamondtall"></daw-tool>
        <daw-tool icon="diamondflat"></daw-tool>
        <daw-tool icon="diamondflattall"></daw-tool>
        <daw-sep narrow></daw-sep>
        <daw-tool icon="wavein"></daw-tool>
        <daw-tool icon="waveout"></daw-tool>
        <daw-tool icon="arrange"></daw-tool>
        <daw-tool icon="spectrum"></daw-tool>
    `);

    define('daw-status', `
        :host { display: flex; height: 27px; background: #f0f0f0; color: #1b1b1b; font-size: 17px; line-height: 29px; white-space: pre; }
        .load { flex: 1; display: flex; gap: 22px; padding-left: 3px; }
        .buf, .fmt { padding-left: 6px; border-left: 1px solid #cfcfcf; }
        .buf { width: 268px; }
        .fmt { width: 270px; }
    `, `
        <div class="load"><span>DSP: 0 %</span><span>Disk:   0 %</span></div>
        <div class="buf">PlayBuf 1/4  Max 1  Err 0</div>
        <div class="fmt">16 Bit Playback</div>
    `);

    /* ---------- desktop taskbar ---------- */

    define('desk-taskbar', `
        :host { display: flex; align-items: center; height: 60px; background: linear-gradient(90deg, #223a42, #20343f 50%, #1f2f42 75%, #1b2440); color: #fff; font-size: 17px; }
        .start { width: 73px; height: 60px; }
        .search { display: flex; align-items: center; gap: 17px; width: 515px; height: 60px; padding-left: 16px; border: 2px solid #bdbdbd; background: #f1f1f1; }
        .search input { flex: 1; height: 50px; padding-top: 2px; font-size: 22px; color: #222; }
        .search input::placeholder { color: #2a2a2a; opacity: 1; }
        .apps { display: flex; flex: 1; }
        .apps button { width: 75px; height: 60px; }
        .apps button:first-child { width: 71px; }
        .apps .on { background: #4a5c65; border-bottom: 3px solid #76b9ed; padding-top: 3px; }
        .tray { display: flex; align-items: center; gap: 13px; }
        .clock { width: 104px; margin-left: 15px; text-align: center; line-height: 28px; }
        .note { margin: 0 30px 0 22px; }
        .peek { width: 7px; height: 60px; border-left: 2px solid #8c90a0; }
    `, `
        <button class="start" aria-label="Start"><svg width="24" height="24" fill="#fff"><path d="M0 3l11-1.500V11.500H0zM12 1.300L24 0v11.500H12zM0 12.500h11v10L0 21zM12 12.500h12V24l-12-1.500z"/></svg></button>
        <div class="search">
            <svg width="24" height="26" fill="none" stroke="#111" stroke-width="2"><circle cx="15" cy="9" r="8"/><path d="M9 15L1 24"/></svg>
            <input type="text" placeholder="Type here to search" aria-label="Type here to search">
        </div>
        <div class="apps">
            <button aria-label="Assistant"><svg width="24" height="24"><circle cx="12" cy="12" r="10" fill="none" stroke="#fff" stroke-width="3"/></svg></button>
            <button aria-label="Task view"><svg width="26" height="24" fill="none" stroke="#fff" stroke-width="1.500"><path d="M1 0v4h16V0M1 7h16v10H1zM1 24v-4h16v4M23 0v6M23 13v11"/><path d="M21.500 8h3v3h-3z" fill="#fff" stroke="none"/></svg></button>
            <button aria-label="Files"><svg width="34" height="28"><path d="M1 1h13l3 4H1z" fill="#d99e0b"/><path d="M1 4h32v23H1z" fill="#fbcf55"/><path d="M7 27V17q0-3 3-3h14q3 0 3 3v10h-5v-7H12v7z" fill="#3e97d8"/></svg></button>
            <button aria-label="Store"><svg width="36" height="34"><path d="M12 9V6q0-5 6-5t6 5v3" fill="none" stroke="#fff" stroke-width="2"/><path d="M1 9h34v23a2 2 0 0 1-2 2H3a2 2 0 0 1-2-2z" fill="#fff"/><path d="M10 14h7v6h-7z" fill="#f25022"/><path d="M19 14h7v6h-7z" fill="#7fba00"/><path d="M10 22h7v6h-7z" fill="#00a4ef"/><path d="M19 22h7v6h-7z" fill="#ffb900"/></svg></button>
            <button aria-label="Control Panel"><svg width="32" height="22"><path d="M0 0h32v22H0z" fill="#6fc8f5"/><circle cx="10" cy="8" r="5" fill="#f6fafd"/><path d="M10 8V3a5 5 0 0 0-3 9z" fill="#f5a623"/><path d="M21 3h8v3h-8zM21 9h8v3h-8zM21 15h8v3h-8zM18 4v12" fill="#a9e0fc" stroke="#2a7fc2"/><path d="M4 17h5" stroke="#222" stroke-width="2"/><path d="M11 17h4" stroke="#ffe08a" stroke-width="2"/></svg></button>
            <button class="on" aria-label="Samplitude"><svg width="36" height="36"><path d="M0 0h36v36H0z" fill="#dde0e0"/><path d="M29 12l7 8v16H18L8 28z" fill="#bfc4c5"/><path d="M7 7h22v22H7z" fill="#6f9096"/><path d="M23 11q-7-3-7 2c0 4 3 4 3 9 0 4-4 5-8 3" fill="none" stroke="#e8eded" stroke-width="5"/><path d="M23 11q-7-3-7 2c0 4 3 4 3 9 0 4-4 5-8 3" fill="none" stroke="#111" stroke-width="3"/></svg></button>
        </div>
        <div class="tray">
            <svg width="20" height="12" fill="none" stroke="#fff" stroke-width="1.500"><path d="M1 11l9-9 9 9"/></svg>
            <svg width="24" height="14"><path d="M1 1h20v12H1z" fill="none" stroke="#fff" stroke-width="1.500"/><path d="M3 3h9v8H3zM22 5h2v4h-2z" fill="#fff"/></svg>
            <svg width="26" height="20" fill="none" stroke="#fff" stroke-width="1.500"><path d="M1 7h4l5-5v16l-5-5H1zM13 7q2 3 0 6M17 5q4 5 0 10M21 2q5 8 0 16"/></svg>
            <span>ENG</span>
        </div>
        <div class="clock">18:08<br>13/06/2020</div>
        <button class="note" aria-label="Notifications"><svg width="26" height="26"><path d="M1 1h24v19h-8l-4 5-4-5H1z" fill="#fff"/><path d="M6 6h14M6 10h14M6 14h9" stroke="#1b2440" stroke-width="1.500"/></svg></button>
        <div class="peek"></div>
    `);

    define('daw-app', `
        :host { display: flex; flex-direction: column; height: 100vh; }
    `, `
        <daw-titlebar>Samplitude Pro X2 Silver (Build 176, 64 Bit)  -  frite stereo 1.wav  Stereo 16 Bit 44100 Hz L: 00:01:59:15 M: 21.102.592</daw-titlebar>
        <daw-menubar>
            <a href="#">File</a>
            <a href="#">Edit</a>
            <a href="#">Track</a>
            <a href="#">Object</a>
            <a href="#">Play / Rec</a>
            <a href="#">Automation</a>
            <a href="#">Effects</a>
            <a href="#">CD/DVD</a>
            <a href="#">View</a>
            <a href="#">Help</a>
            <a href="#">Upgrade!</a>
        </daw-menubar>
        <daw-toolbar></daw-toolbar>
        <daw-tabs>frite stereo 1.wav</daw-tabs>
        <daw-arranger></daw-arranger>
        <daw-hscroll></daw-hscroll>
        <daw-transport></daw-transport>
        <daw-workspace></daw-workspace>
        <daw-status></daw-status>
        <desk-taskbar></desk-taskbar>
    `);
</script>
</body>
</html>
